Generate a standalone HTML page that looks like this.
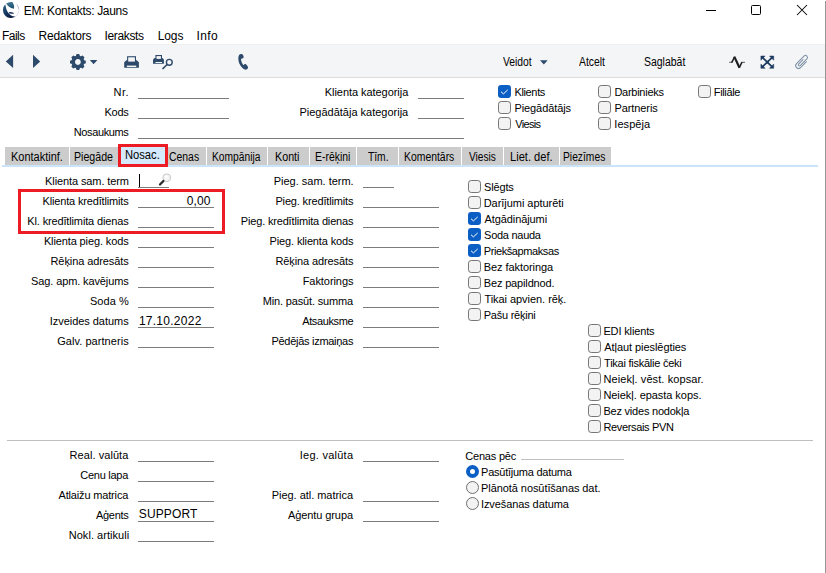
<!DOCTYPE html>
<html><head><meta charset="utf-8"><title>EM: Kontakts: Jauns</title>
<style>
html,body{margin:0;padding:0}
body{width:826px;height:573px;overflow:hidden;background:#fff;position:relative;font-family:"Liberation Sans",sans-serif}
.t{position:absolute;white-space:pre;}
.l,.a,.cb,.rd,.tab,.red{position:absolute}
#tb{position:absolute;left:0;top:44px;width:825px;height:33px;background:#f4f5f7;border-top:1px solid #efefef;border-bottom:1px solid #dddddd;box-sizing:content-box;height:32px}
.cb{width:13px;height:13px;box-sizing:border-box;border:1px solid #767676;border-radius:3.2px;background:#f3f3f3}
.cb.on{border:none;background:#0a5ec4}
.cb svg{display:block}
.rd{width:13px;height:13px;box-sizing:border-box;border:1px solid #6f6f6f;border-radius:50%;background:#f3f3f3}
.rd.on{border:4px solid #0a5ec4;background:#fff}
.tab{top:147px;height:18px;background:#cccccc}
#atab{position:absolute;left:118px;top:144px;width:50px;height:23px;box-sizing:border-box;border:3px solid #ed1c24;background:#d4e9fb}
.red{box-sizing:content-box;border:3px solid #ed1c24}
</style></head>
<body>
<div id="tb"></div>
<div class="l" style="left:825px;top:1px;width:1px;height:572px;background:#969696"></div>
<div class="l" style="left:138px;top:98px;width:91px;height:1px;background:#7c7c7c"></div>
<div class="l" style="left:138px;top:118px;width:91px;height:1px;background:#7c7c7c"></div>
<div class="l" style="left:138px;top:138px;width:326px;height:1px;background:#7c7c7c"></div>
<div class="l" style="left:418px;top:98px;width:46px;height:1px;background:#7c7c7c"></div>
<div class="l" style="left:418px;top:118px;width:46px;height:1px;background:#7c7c7c"></div>
<div class="cb on" style="left:498px;top:85px"><svg width="13" height="13" viewBox="0 0 13 13"><path d="M3.3 7.0 L5.4 8.9 L9.4 5.2" fill="none" stroke="#fff" stroke-width="1.0" stroke-linecap="round" stroke-linejoin="round"/></svg></div>
<div class="cb" style="left:498px;top:101px"></div>
<div class="cb" style="left:498px;top:117px"></div>
<div class="cb" style="left:598px;top:85px"></div>
<div class="cb" style="left:598px;top:101px"></div>
<div class="cb" style="left:598px;top:117px"></div>
<div class="cb" style="left:698px;top:85px"></div>
<div class="tab" style="left:5px;width:64px"></div>
<div class="tab" style="left:70px;width:48px"></div>
<div class="tab" style="left:168px;width:38px"></div>
<div class="tab" style="left:207px;width:60px"></div>
<div class="tab" style="left:268px;width:41px"></div>
<div class="tab" style="left:310px;width:46px"></div>
<div class="tab" style="left:357px;width:41px"></div>
<div class="tab" style="left:399px;width:62px"></div>
<div class="tab" style="left:462px;width:41px"></div>
<div class="tab" style="left:504px;width:55px"></div>
<div class="tab" style="left:560px;width:50.5px"></div>
<div class="l" style="left:2px;top:165px;width:816px;height:2px;background:#cce4f9"></div>
<div id="atab"></div>
<div class="l" style="left:138px;top:187px;width:31px;height:1px;background:#7c7c7c"></div>
<div class="l" style="left:138px;top:207px;width:76px;height:1px;background:#7c7c7c"></div>
<div class="l" style="left:138px;top:227px;width:76px;height:1px;background:#7c7c7c"></div>
<div class="l" style="left:138px;top:247px;width:76px;height:1px;background:#7c7c7c"></div>
<div class="l" style="left:138px;top:267px;width:76px;height:1px;background:#7c7c7c"></div>
<div class="l" style="left:138px;top:287px;width:76px;height:1px;background:#7c7c7c"></div>
<div class="l" style="left:138px;top:307px;width:76px;height:1px;background:#7c7c7c"></div>
<div class="l" style="left:138px;top:327px;width:76px;height:1px;background:#7c7c7c"></div>
<div class="l" style="left:138px;top:347px;width:76px;height:1px;background:#7c7c7c"></div>
<div class="l" style="left:363px;top:187px;width:31px;height:1px;background:#7c7c7c"></div>
<div class="l" style="left:363px;top:207px;width:76px;height:1px;background:#7c7c7c"></div>
<div class="l" style="left:363px;top:227px;width:76px;height:1px;background:#7c7c7c"></div>
<div class="l" style="left:363px;top:247px;width:76px;height:1px;background:#7c7c7c"></div>
<div class="l" style="left:363px;top:267px;width:76px;height:1px;background:#7c7c7c"></div>
<div class="l" style="left:363px;top:287px;width:76px;height:1px;background:#7c7c7c"></div>
<div class="l" style="left:363px;top:307px;width:76px;height:1px;background:#7c7c7c"></div>
<div class="l" style="left:363px;top:327px;width:76px;height:1px;background:#7c7c7c"></div>
<div class="l" style="left:363px;top:347px;width:76px;height:1px;background:#7c7c7c"></div>
<div class="l" style="left:139px;top:174px;width:1px;height:13px;background:#000"></div>
<svg class="a" style="left:157px;top:172px" width="16" height="16" viewBox="0 0 16 16">
<circle cx="9.8" cy="5.8" r="3.9" fill="#f4f4f4" stroke="#c9c9c9" stroke-width="1"/>
<circle cx="9.2" cy="5.0" r="1.6" fill="#ffffff"/>
<path d="M6.4 9.0 L3.0 12.5" stroke="#2b2b2b" stroke-width="2.3" stroke-linecap="round"/>
</svg>
<div class="red" style="left:18px;top:189px;width:201px;height:39px"></div>
<div class="cb" style="left:468px;top:180px"></div>
<div class="cb" style="left:468px;top:196px"></div>
<div class="cb on" style="left:468px;top:212px"><svg width="13" height="13" viewBox="0 0 13 13"><path d="M3.3 7.0 L5.4 8.9 L9.4 5.2" fill="none" stroke="#fff" stroke-width="1.0" stroke-linecap="round" stroke-linejoin="round"/></svg></div>
<div class="cb on" style="left:468px;top:228px"><svg width="13" height="13" viewBox="0 0 13 13"><path d="M3.3 7.0 L5.4 8.9 L9.4 5.2" fill="none" stroke="#fff" stroke-width="1.0" stroke-linecap="round" stroke-linejoin="round"/></svg></div>
<div class="cb on" style="left:468px;top:244px"><svg width="13" height="13" viewBox="0 0 13 13"><path d="M3.3 7.0 L5.4 8.9 L9.4 5.2" fill="none" stroke="#fff" stroke-width="1.0" stroke-linecap="round" stroke-linejoin="round"/></svg></div>
<div class="cb" style="left:468px;top:260px"></div>
<div class="cb" style="left:468px;top:276px"></div>
<div class="cb" style="left:468px;top:292px"></div>
<div class="cb" style="left:468px;top:308px"></div>
<div class="cb" style="left:588px;top:324px"></div>
<div class="cb" style="left:588px;top:340px"></div>
<div class="cb" style="left:588px;top:356px"></div>
<div class="cb" style="left:588px;top:372px"></div>
<div class="cb" style="left:588px;top:388px"></div>
<div class="cb" style="left:588px;top:404px"></div>
<div class="cb" style="left:588px;top:420px"></div>
<div class="l" style="left:7px;top:440px;width:806px;height:1px;background:#c0c0c0"></div>
<div class="l" style="left:138px;top:461px;width:76px;height:1px;background:#7c7c7c"></div>
<div class="l" style="left:138px;top:481px;width:76px;height:1px;background:#7c7c7c"></div>
<div class="l" style="left:138px;top:501px;width:76px;height:1px;background:#7c7c7c"></div>
<div class="l" style="left:138px;top:521px;width:76px;height:1px;background:#7c7c7c"></div>
<div class="l" style="left:138px;top:541px;width:76px;height:1px;background:#7c7c7c"></div>
<div class="l" style="left:363px;top:461px;width:76px;height:1px;background:#7c7c7c"></div>
<div class="l" style="left:363px;top:501px;width:76px;height:1px;background:#7c7c7c"></div>
<div class="l" style="left:363px;top:521px;width:76px;height:1px;background:#7c7c7c"></div>
<div class="l" style="left:521px;top:459px;width:103px;height:1px;background:#c0c0c0"></div>
<div class="rd on" style="left:466px;top:465px"></div>
<div class="rd" style="left:466px;top:481px"></div>
<div class="rd" style="left:466px;top:497px"></div>
<svg class="a" style="left:0px;top:0px" width="24" height="20" viewBox="0 0 24 20">
<defs>
<linearGradient id="g1" x1="0" y1="0" x2="0.6" y2="1"><stop offset="0" stop-color="#2f6488"/><stop offset="0.55" stop-color="#163a63"/><stop offset="1" stop-color="#0a1a40"/></linearGradient>
<linearGradient id="g2" x1="0" y1="0" x2="0.3" y2="1"><stop offset="0" stop-color="#4a7d98"/><stop offset="1" stop-color="#1f5273"/></linearGradient>
</defs>
<circle cx="11" cy="10" r="7.9" fill="#ffffff"/>
<path d="M16.8 4.6 A8 8 0 0 1 18.9 9.4" fill="none" stroke="#8f95bd" stroke-width="0.9" opacity="0.75"/>
<path d="M18.9 10.6 A8 8 0 0 1 15.6 16.5" fill="none" stroke="#c9cfe0" stroke-width="0.8" opacity="0.7"/>
<path d="M5.34 4.34 A8 8 0 0 0 15.6 16.55 C12.8 16.9 9.2 15.0 7.4 11.6 C6.3 9.4 5.6 6.8 5.34 4.34 Z" fill="url(#g1)"/>
<path d="M6.2 3.6 A8 8 0 0 1 12.3 2.1 C13.7 3.8 14.4 6.4 14.0 8.7 C11.2 8.5 8.1 6.9 6.2 3.6 Z" fill="url(#g2)"/>
<ellipse cx="11.4" cy="12.95" rx="2.6" ry="0.8" transform="rotate(7 11.4 12.95)" fill="#15305c"/>
</svg>
<svg class="a" style="left:700px;top:0px" width="120" height="20" viewBox="0 0 120 20">
<path d="M6 10.5 H16" stroke="#000" stroke-width="1"/>
<rect x="51.5" y="5.5" width="9" height="9" rx="1" fill="none" stroke="#000" stroke-width="1"/>
<path d="M97 5 L107 15 M107 5 L97 15" stroke="#000" stroke-width="1.05"/>
</svg>
<svg class="a" style="left:0px;top:45px" width="260" height="32" viewBox="0 0 260 32">
<path d="M5.8 16.4 L13.1 9.8 V23 Z" fill="#2d4a6b"/>
<path d="M40.2 16.4 L33 9.8 V23 Z" fill="#2d4a6b"/>
<g transform="translate(77.9 17.0)" fill="#2d4a6b">
<path id="tooth" d="M-1.6 -7.3 Q-1.6 -7.9 -1.0 -7.9 H1.0 Q1.6 -7.9 1.6 -7.3 L2.1 -5.5 H-2.1 Z"/>
<use href="#tooth" transform="rotate(45)"/><use href="#tooth" transform="rotate(90)"/><use href="#tooth" transform="rotate(135)"/>
<use href="#tooth" transform="rotate(180)"/><use href="#tooth" transform="rotate(225)"/><use href="#tooth" transform="rotate(270)"/><use href="#tooth" transform="rotate(315)"/>
<path fill-rule="evenodd" d="M0 -6.4 A6.4 6.4 0 1 0 0.001 -6.4 Z M0 -2.9 A2.9 2.9 0 1 1 -0.001 -2.9 Z"/>
</g>
<path d="M89.8 15.0 H97.4 L93.6 19.3 Z" fill="#2d4a6b"/>
<!-- printer -->
<g fill="#2d4a6b">
<path d="M127.1 11.2 H136 V17 H127.1 Z"/>
<path d="M124.2 17.2 L126.4 15.2 H136.7 L138.9 17.2 V22.8 H124.2 Z"/>
</g>
<rect x="128.2" y="12.3" width="6.7" height="4.3" fill="#f4f5f7"/>
<rect x="126.9" y="20.6" width="9.3" height="1.4" fill="#f4f5f7"/>
<!-- print preview -->
<g fill="#2d4a6b">
<path d="M155.4 10 H162 V14 H155.4 Z"/>
<path d="M153 14.4 L154.5 13 H162.5 L163.9 14.4 V18.8 H153 Z"/>
</g>
<rect x="156.5" y="11.1" width="4.4" height="2.8" fill="#f4f5f7"/>
<rect x="155.5" y="17.0" width="6.5" height="1.0" fill="#f4f5f7"/>
<circle cx="169.3" cy="17.3" r="2.9" fill="none" stroke="#2d4a6b" stroke-width="1.4"/>
<path d="M167.1 19.5 L162.9 23.6" stroke="#2d4a6b" stroke-width="1.5" stroke-linecap="round"/>
<!-- phone -->
<path transform="translate(0 -45)" d="M239.2 54.8 C240.2 54.0 241.6 53.8 242.6 54.4 C243.4 55.2 243.8 56.6 243.6 57.6 C243.3 58.5 242.3 58.9 241.0 58.7 C240.9 60.5 241.9 63.2 243.6 65.2 C244.2 64.2 245.2 63.7 245.9 64.3 C247.0 65.3 247.9 66.5 248.1 67.6 C248.0 68.8 246.8 69.7 245.6 69.7 C243.0 69.0 240.6 66.6 239.2 63.2 C238.2 60.5 237.9 57.0 239.2 54.8 Z" fill="#2d4a6b"/>
</svg>
<svg class="a" style="left:530px;top:45px" width="290" height="32" viewBox="0 0 290 32">
<path d="M10.0 15.3 H17.7 L13.85 19.5 Z" fill="#2d4a6b"/>
<!-- pulse -->
<g fill="none" stroke="#1e1e1e" stroke-linecap="butt">
<path d="M199.2 17.3 H202.2" stroke-width="0.9" stroke="#4a4a4a"/>
<path d="M211.6 17.3 H215" stroke-width="0.9" stroke="#4a4a4a"/>
<path d="M201.7 17.6 L204.6 11.9" stroke-width="1.5"/>
<path d="M204.3 11.6 L209.5 22.8" stroke-width="2.2"/>
<path d="M209.3 22.6 L212.0 17.2" stroke-width="1.5"/>
</g>
<!-- expand -->
<g fill="#1c3b5e" stroke="#1c3b5e">
<path d="M232.4 12.4 L242.2 21.9 M242.2 12.4 L232.4 21.9" stroke-width="1.7" fill="none"/>
<rect x="236.0" y="15.9" width="2.6" height="2.6" stroke="none"/>
<path d="M230.9 11.0 h4.2 l-4.2 4.2 z M243.7 11.0 v4.2 l-4.2 -4.2 z M230.9 23.3 v-4.2 l4.2 4.2 z M243.7 23.3 h-4.2 l4.2 -4.2 z" stroke-width="0.5" stroke-linejoin="round"/>
</g>
<!-- paperclip -->
<g transform="translate(271.6 17.1) rotate(-45) scale(0.92)">
<path d="M4 3.4 L-5 3.4 A3.1 3.1 0 0 1 -5 -2.8 L6.5 -2.8 A2.2 2.2 0 0 1 6.5 1.6 L-3.8 1.6 A1.2 1.2 0 0 1 -3.8 -0.8 L3 -0.8" fill="none" stroke="#7d90a6" stroke-width="1.1" stroke-linecap="round"/>
</g>
</svg>
<span class="t" style="font-size:12px;line-height:16px;top:2.94px;color:#000;letter-spacing:-0.327px;left:23.74px;">EM: Kontakts: Jauns</span>
<span class="t" style="font-size:12px;line-height:16px;top:27.94px;color:#000;letter-spacing:-0.541px;left:2.04px;">Fails</span>
<span class="t" style="font-size:12px;line-height:16px;top:27.94px;color:#000;letter-spacing:-0.228px;left:38.54px;">Redaktors</span>
<span class="t" style="font-size:12px;line-height:16px;top:27.94px;color:#000;letter-spacing:-0.345px;left:104.52px;">Ieraksts</span>
<span class="t" style="font-size:12px;line-height:16px;top:27.94px;color:#000;letter-spacing:-0.084px;left:157.64px;">Logs</span>
<span class="t" style="font-size:12px;line-height:16px;top:27.94px;color:#000;letter-spacing:0.450px;left:196.42px;">Info</span>
<span class="t" style="font-size:12px;line-height:16px;top:53.54px;color:#000;transform:scaleX(0.8608);transform-origin:0 0;left:503.30px;">Veidot</span>
<span class="t" style="font-size:12px;line-height:16px;top:53.54px;color:#000;transform:scaleX(0.8639);transform-origin:0 0;left:579.10px;">Atcelt</span>
<span class="t" style="font-size:12px;line-height:16px;top:53.54px;color:#000;transform:scaleX(0.8718);transform-origin:0 0;left:643.73px;">Saglabāt</span>
<span class="t" style="font-size:11px;line-height:14px;top:85.19px;color:#000;letter-spacing:0.450px;left:113.60px;">Nr.</span>
<span class="t" style="font-size:11px;line-height:14px;top:105.19px;color:#000;letter-spacing:-0.271px;left:104.52px;">Kods</span>
<span class="t" style="font-size:11px;line-height:14px;top:125.19px;color:#000;letter-spacing:-0.377px;left:73.72px;">Nosaukums</span>
<span class="t" style="font-size:11px;line-height:14px;top:85.19px;color:#000;letter-spacing:-0.056px;left:324.82px;">Klienta kategorija</span>
<span class="t" style="font-size:11px;line-height:14px;top:105.19px;color:#000;letter-spacing:-0.001px;left:299.42px;">Piegādātāja kategorija</span>
<span class="t" style="font-size:11px;line-height:14px;top:85.19px;color:#000;letter-spacing:-0.344px;left:514.42px;">Klients</span>
<span class="t" style="font-size:11px;line-height:14px;top:101.19px;color:#000;letter-spacing:-0.083px;left:514.42px;">Piegādātājs</span>
<span class="t" style="font-size:11px;line-height:14px;top:117.19px;color:#000;letter-spacing:-0.674px;left:515.30px;">Viesis</span>
<span class="t" style="font-size:11px;line-height:14px;top:85.19px;color:#000;letter-spacing:-0.267px;left:614.42px;">Darbinieks</span>
<span class="t" style="font-size:11px;line-height:14px;top:101.19px;color:#000;letter-spacing:-0.083px;left:614.42px;">Partneris</span>
<span class="t" style="font-size:11px;line-height:14px;top:117.19px;color:#000;letter-spacing:0.061px;left:614.31px;">Iespēja</span>
<span class="t" style="font-size:11px;line-height:14px;top:85.19px;color:#000;letter-spacing:-0.350px;left:713.82px;">Filiāle</span>
<span class="t" style="font-size:11px;line-height:14px;top:174.19px;color:#000;letter-spacing:-0.108px;left:45.12px;">Klienta sam. term</span>
<span class="t" style="font-size:11px;line-height:14px;top:194.19px;color:#000;letter-spacing:-0.163px;left:42.52px;">Klienta kredītlimits</span>
<span class="t" style="font-size:11px;line-height:14px;top:214.19px;color:#000;letter-spacing:-0.145px;left:27.32px;">Kl. kredītlimita dienas</span>
<span class="t" style="font-size:11px;line-height:14px;top:234.19px;color:#000;letter-spacing:-0.122px;left:43.92px;">Klienta pieg. kods</span>
<span class="t" style="font-size:11px;line-height:14px;top:254.19px;color:#000;letter-spacing:-0.095px;left:50.52px;">Rēķina adresāts</span>
<span class="t" style="font-size:11px;line-height:14px;top:274.19px;color:#000;letter-spacing:-0.122px;left:31.10px;">Sag. apm. kavējums</span>
<span class="t" style="font-size:11px;line-height:14px;top:294.19px;color:#000;letter-spacing:0.028px;left:90.00px;">Soda %</span>
<span class="t" style="font-size:11px;line-height:14px;top:314.19px;color:#000;letter-spacing:-0.036px;left:49.71px;">Izveides datums</span>
<span class="t" style="font-size:11px;line-height:14px;top:334.19px;color:#000;letter-spacing:0.058px;left:57.15px;">Galv. partneris</span>
<span class="t" style="font-size:11px;line-height:14px;top:174.19px;color:#000;letter-spacing:-0.009px;left:273.72px;">Pieg. sam. term.</span>
<span class="t" style="font-size:11px;line-height:14px;top:194.19px;color:#000;letter-spacing:-0.155px;left:275.42px;">Pieg. kredītlimits</span>
<span class="t" style="font-size:11px;line-height:14px;top:214.19px;color:#000;letter-spacing:-0.172px;left:240.82px;">Pieg. kredītlimita dienas</span>
<span class="t" style="font-size:11px;line-height:14px;top:234.19px;color:#000;letter-spacing:-0.138px;left:269.62px;">Pieg. klienta kods</span>
<span class="t" style="font-size:11px;line-height:14px;top:254.19px;color:#000;letter-spacing:-0.102px;left:275.42px;">Rēķina adresāts</span>
<span class="t" style="font-size:11px;line-height:14px;top:274.19px;color:#000;letter-spacing:-0.066px;left:302.72px;">Faktorings</span>
<span class="t" style="font-size:11px;line-height:14px;top:294.19px;color:#000;letter-spacing:-0.168px;left:262.82px;">Min. pasūt. summa</span>
<span class="t" style="font-size:11px;line-height:14px;top:314.19px;color:#000;letter-spacing:-0.384px;left:302.20px;">Atsauksme</span>
<span class="t" style="font-size:11px;line-height:14px;top:334.19px;color:#000;letter-spacing:-0.277px;left:271.42px;">Pēdējās izmaiņas</span>
<span class="t" style="font-size:11px;line-height:14px;top:180.19px;color:#000;letter-spacing:-0.180px;left:484.11px;">Slēgts</span>
<span class="t" style="font-size:11px;line-height:14px;top:196.19px;color:#000;letter-spacing:-0.043px;left:483.72px;">Darījumi apturēti</span>
<span class="t" style="font-size:11px;line-height:14px;top:212.19px;color:#000;letter-spacing:-0.096px;left:484.60px;">Atgādinājumi</span>
<span class="t" style="font-size:11px;line-height:14px;top:228.19px;color:#000;letter-spacing:-0.277px;left:484.11px;">Soda nauda</span>
<span class="t" style="font-size:11px;line-height:14px;top:244.19px;color:#000;letter-spacing:-0.403px;left:483.72px;">Priekšapmaksas</span>
<span class="t" style="font-size:11px;line-height:14px;top:260.19px;color:#000;letter-spacing:-0.068px;left:483.72px;">Bez faktoringa</span>
<span class="t" style="font-size:11px;line-height:14px;top:276.19px;color:#000;letter-spacing:-0.149px;left:483.72px;">Bez papildnod.</span>
<span class="t" style="font-size:11px;line-height:14px;top:292.19px;color:#000;letter-spacing:-0.045px;left:484.38px;">Tikai apvien. rēķ.</span>
<span class="t" style="font-size:11px;line-height:14px;top:308.19px;color:#000;letter-spacing:-0.240px;left:483.72px;">Pašu rēķini</span>
<span class="t" style="font-size:11px;line-height:14px;top:324.19px;color:#000;letter-spacing:-0.141px;left:603.42px;">EDI klients</span>
<span class="t" style="font-size:11px;line-height:14px;top:340.19px;color:#000;letter-spacing:-0.064px;left:604.30px;">Atļaut pieslēgties</span>
<span class="t" style="font-size:11px;line-height:14px;top:356.19px;color:#000;letter-spacing:-0.248px;left:604.08px;">Tikai fiskālie čeki</span>
<span class="t" style="font-size:11px;line-height:14px;top:372.19px;color:#000;letter-spacing:0.090px;left:603.42px;">Neiekļ. vēst. kopsar.</span>
<span class="t" style="font-size:11px;line-height:14px;top:388.19px;color:#000;letter-spacing:-0.053px;left:603.42px;">Neiekļ. epasta kops.</span>
<span class="t" style="font-size:11px;line-height:14px;top:404.19px;color:#000;letter-spacing:-0.215px;left:603.42px;">Bez vides nodokļa</span>
<span class="t" style="font-size:11px;line-height:14px;top:420.19px;color:#000;letter-spacing:-0.346px;left:603.42px;">Reversais PVN</span>
<span class="t" style="font-size:11px;line-height:14px;top:448.19px;color:#000;letter-spacing:0.059px;left:69.62px;">Real. valūta</span>
<span class="t" style="font-size:11px;line-height:14px;top:468.19px;color:#000;letter-spacing:-0.256px;left:80.25px;">Cenu lapa</span>
<span class="t" style="font-size:11px;line-height:14px;top:488.19px;color:#000;letter-spacing:-0.163px;left:58.50px;">Atlaižu matrica</span>
<span class="t" style="font-size:11px;line-height:14px;top:508.19px;color:#000;letter-spacing:-0.293px;left:96.00px;">Aģents</span>
<span class="t" style="font-size:11px;line-height:14px;top:528.19px;color:#000;letter-spacing:0.039px;left:68.72px;">Nokl. artikuli</span>
<span class="t" style="font-size:11px;line-height:14px;top:448.19px;color:#000;letter-spacing:0.258px;left:299.71px;">Ieg. valūta</span>
<span class="t" style="font-size:11px;line-height:14px;top:488.19px;color:#000;letter-spacing:-0.034px;left:271.72px;">Pieg. atl. matrica</span>
<span class="t" style="font-size:11px;line-height:14px;top:508.19px;color:#000;letter-spacing:-0.082px;left:287.90px;">Aģentu grupa</span>
<span class="t" style="font-size:11px;line-height:14px;top:448.99px;color:#000;letter-spacing:-0.196px;left:465.25px;">Cenas pēc</span>
<span class="t" style="font-size:11px;line-height:14px;top:465.19px;color:#000;letter-spacing:-0.253px;left:481.12px;">Pasūtījuma datuma</span>
<span class="t" style="font-size:11px;line-height:14px;top:481.19px;color:#000;letter-spacing:-0.076px;left:481.12px;">Plānotā nosūtīšanas dat.</span>
<span class="t" style="font-size:11px;line-height:14px;top:497.19px;color:#000;letter-spacing:-0.096px;left:481.01px;">Izvešanas datuma</span>
<span class="t" style="font-size:12px;line-height:16px;top:192.54px;color:#000;letter-spacing:0.165px;left:186.68px;">0,00</span>
<span class="t" style="font-size:12px;line-height:16px;top:312.54px;color:#000;letter-spacing:0.266px;left:138.90px;">17.10.2022</span>
<span class="t" style="font-size:12px;line-height:16px;top:506.44px;color:#000;letter-spacing:0.149px;left:138.76px;">SUPPORT</span>
<span class="t" style="font-size:12px;line-height:16px;top:148.84px;color:#000;transform:scaleX(0.9143);transform-origin:0 0;left:10.82px;">Kontaktinf.</span>
<span class="t" style="font-size:12px;line-height:16px;top:148.84px;color:#000;transform:scaleX(0.8851);transform-origin:0 0;left:74.45px;">Piegāde</span>
<span class="t" style="font-size:12px;line-height:16px;top:148.84px;color:#000;transform:scaleX(0.8673);transform-origin:0 0;left:169.18px;">Cenas</span>
<span class="t" style="font-size:12px;line-height:16px;top:148.84px;color:#000;transform:scaleX(0.8532);transform-origin:0 0;left:211.88px;">Kompānija</span>
<span class="t" style="font-size:12px;line-height:16px;top:148.84px;color:#000;transform:scaleX(0.8948);transform-origin:0 0;left:275.44px;">Konti</span>
<span class="t" style="font-size:12px;line-height:16px;top:148.84px;color:#000;transform:scaleX(0.8684);transform-origin:0 0;left:314.87px;">E-rēķini</span>
<span class="t" style="font-size:12px;line-height:16px;top:148.84px;color:#000;transform:scaleX(0.8544);transform-origin:0 0;left:367.59px;">Tīm.</span>
<span class="t" style="font-size:12px;line-height:16px;top:148.84px;color:#000;transform:scaleX(0.8667);transform-origin:0 0;left:404.27px;">Komentārs</span>
<span class="t" style="font-size:12px;line-height:16px;top:148.84px;color:#000;transform:scaleX(0.8446);transform-origin:0 0;left:469.00px;">Viesis</span>
<span class="t" style="font-size:12px;line-height:16px;top:148.84px;color:#000;transform:scaleX(0.9246);transform-origin:0 0;left:510.11px;">Liet. def.</span>
<span class="t" style="font-size:12px;line-height:16px;top:148.84px;color:#000;transform:scaleX(0.8566);transform-origin:0 0;left:563.28px;">Piezīmes</span>
<span class="t" style="font-size:12px;line-height:16px;top:146.84px;color:#000;transform:scaleX(0.9308);transform-origin:0 0;left:124.61px;">Nosac.</span>
</body></html>
